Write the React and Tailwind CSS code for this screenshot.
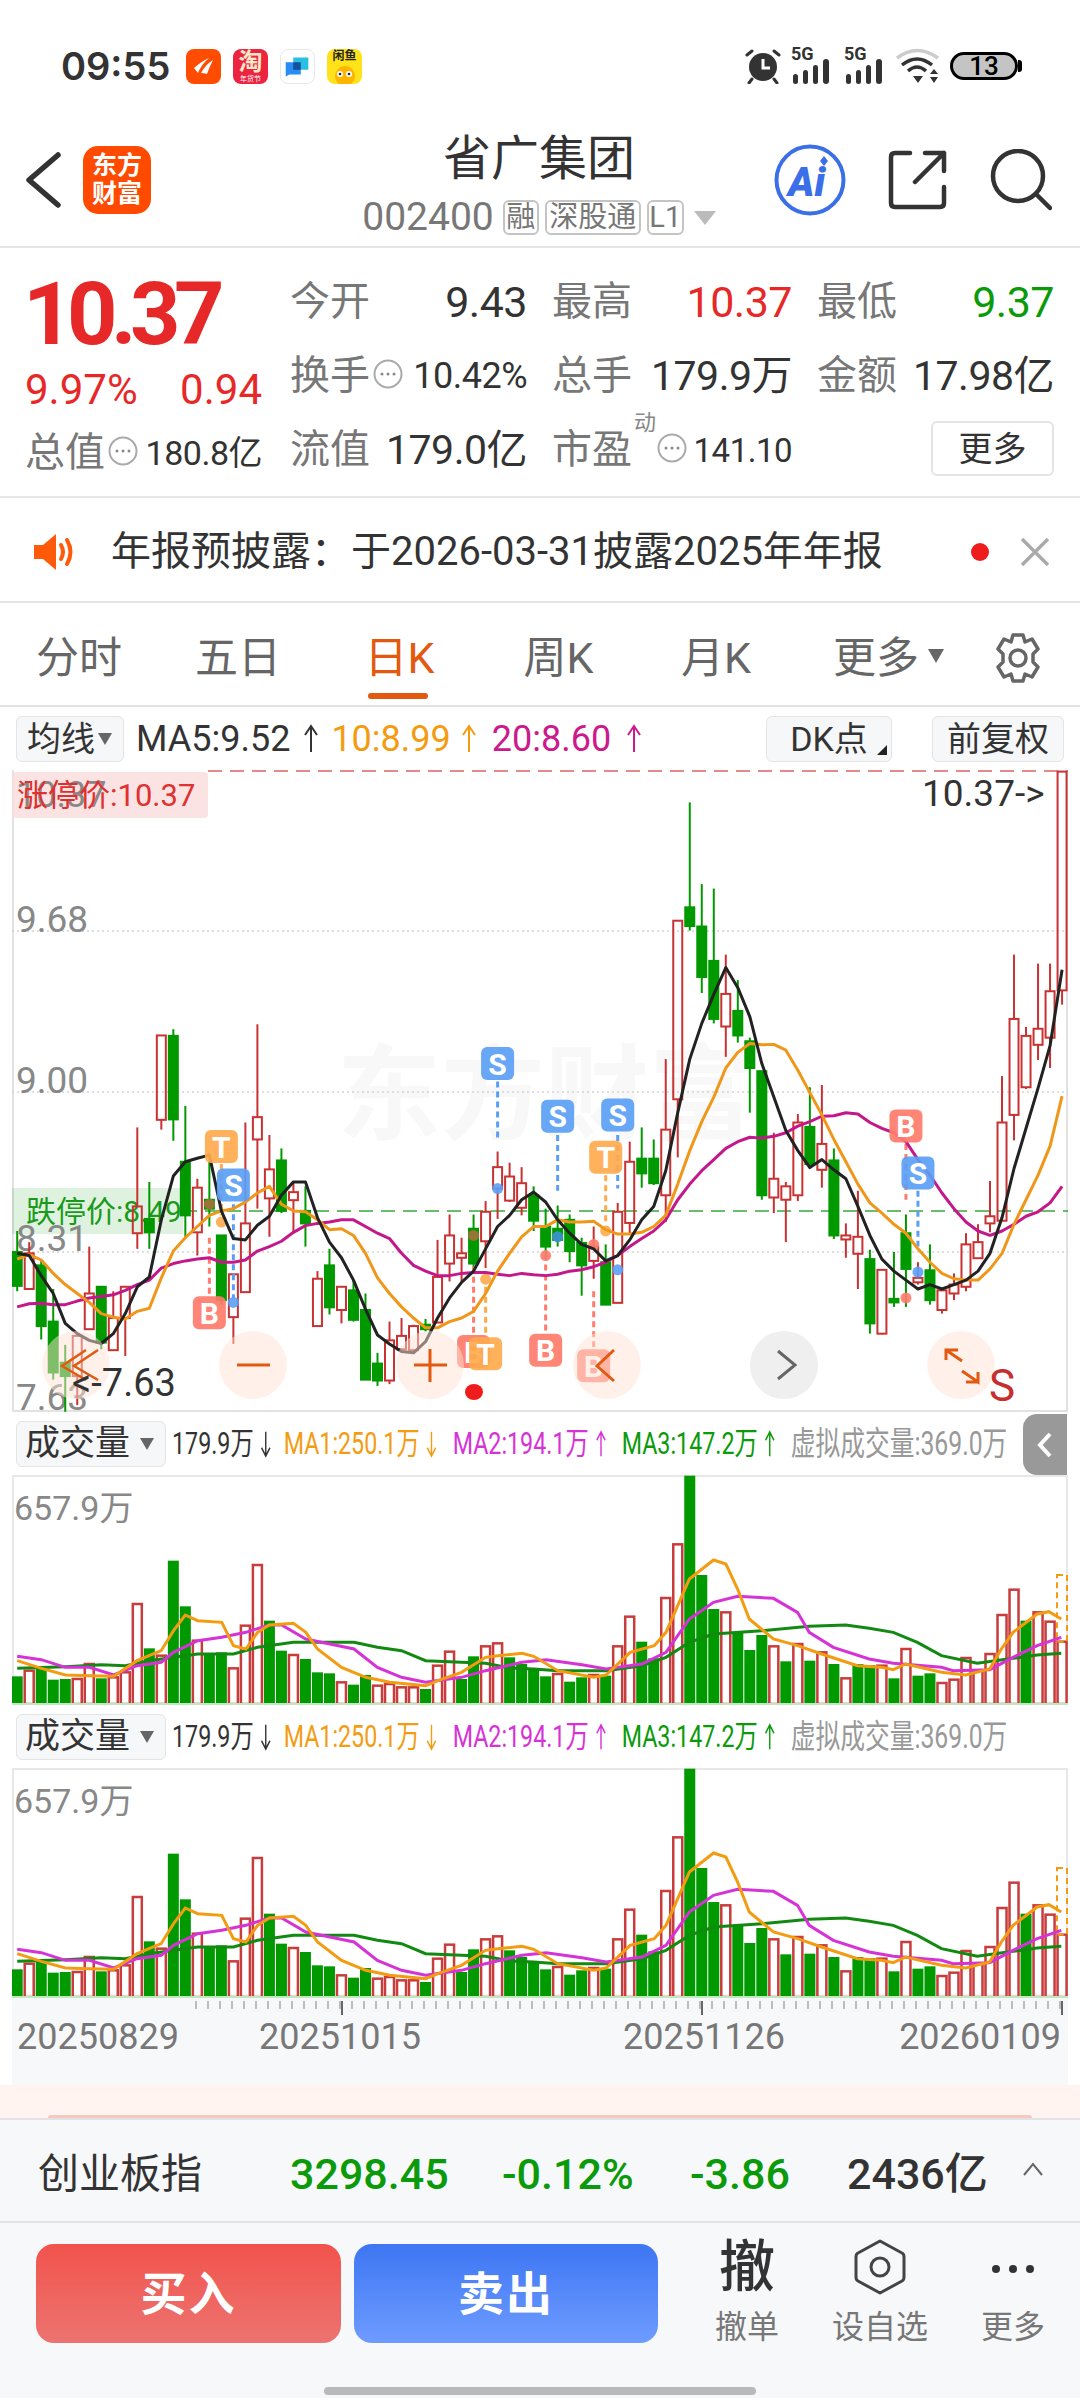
import React from 'react';

// y values below are read off the reference crops, converted by the helpers
const X = (i) => 5.2 + 12.01 * i;
const Y = (z) => z / 2.24 - 10;
const VX = (z) => z / 1.452 - 12;
const VY = (z) => z / 3 - 56;

// [up, wickTop, bodyTop, bodyBottom, wickBottom]
const CANDLES = [
  [0,1055,1102,1178,1190],[1,1080,1105,1185,1185],[0,1120,1132,1268,1298],[0,1185,1258,1372,1388],[0,1310,1350,1380,1460],
  [1,1285,1290,1380,1445],[1,1090,1195,1275,1275],[0,1178,1180,1305,1320],[1,1190,1250,1322,1322],[1,1178,1180,1250,1335],
  [1,823,1000,1060,1095],[0,945,1028,1058,1095],[1,617,617,806,828],[0,603,618,805,853],[0,775,900,1020,1068],
  [1,938,958,1058,1110],[0,900,985,1005,1045],[0,1065,1065,1210,1220],[1,1152,1152,1248,1308],[1,812,1038,1192,1192],
  [1,592,800,850,1005],[1,840,917,982,1068],[0,870,897,1010,1015],[1,945,968,986,1058],[0,955,1010,1038,1090],
  [1,1145,1162,1268,1268],[0,1095,1132,1226,1242],[1,1180,1180,1232,1262],[0,1165,1188,1254,1258],[0,1195,1232,1388,1388],
  [0,1328,1352,1390,1402],[1,1258,1300,1390,1398],[1,1250,1290,1320,1325],[1,1265,1268,1322,1325],[0,1252,1265,1275,1280],
  [1,1075,1158,1260,1260],[1,1018,1065,1128,1168],[1,1070,1105,1115,1168],[0,1018,1050,1128,1150],[1,988,1012,1078,1138],
  [1,877,912,960,1028],[1,902,933,987,990],[1,912,948,1003,1020],[0,955,975,1032,1055],[0,1005,1045,1090,1120],
  [0,998,1050,1075,1090],[0,1018,1030,1100,1125],[0,1070,1082,1132,1200],[1,1045,1090,1122,1162],[0,1085,1125,1220,1220],
  [1,992,1012,1216,1216],[1,855,900,1037,1060],[0,823,893,926,958],[0,850,893,948,952],[1,670,828,975,1035],
  [1,360,360,760,890],[0,95,330,372,382],[0,278,373,486,522],[0,288,450,580,590],[1,436,524,597,665],
  [0,493,562,617,633],[0,622,630,690,790],[0,697,697,975,985],[1,835,938,980,1015],[1,945,955,985,1080],
  [1,793,812,975,988],[0,733,822,905,912],[1,728,860,918,958],[0,870,897,1065,1073],[1,1038,1065,1074,1115],
  [1,965,1068,1106,1185],[0,1097,1118,1262,1285],[1,1142,1142,1285,1287],[0,1102,1207,1215,1225],[0,1018,1060,1140,1225],
  [1,1125,1160,1170,1175],[0,1085,1143,1210,1220],[1,1188,1188,1232,1240],[1,1150,1175,1195,1210],[1,1060,1085,1180,1190],
  [1,1040,1080,1116,1118],[1,943,1022,1038,1058],[1,708,812,1032,1032],[1,436,580,795,852],[1,598,618,733,737],
  [1,456,602,638,672],[1,456,518,622,690],[1,26,26,516,548],
];

const MA5 = [1105,1110,1155,1195,1262,1285,1300,1307,1285,1240,1180,1158,1030,932,900,892,885,1010,1072,1075,1042,1022,975,945,945,1025,1080,1115,1165,1230,1288,1308,1325,1328,1303,1250,1205,1170,1145,1095,1045,1020,985,968,990,1030,1060,1085,1095,1122,1110,1075,1030,1000,920,790,670,590,525,465,510,575,680,755,830,875,913,895,918,938,1000,1065,1118,1145,1165,1185,1175,1185,1175,1165,1145,1105,1025,915,825,735,640,470];
const MA10 = [1118,1108,1120,1150,1175,1195,1215,1240,1248,1252,1235,1228,1160,1100,1070,1045,1020,1010,1005,990,970,955,995,1010,1012,1030,1052,1050,1065,1105,1160,1195,1225,1250,1272,1272,1258,1250,1235,1195,1145,1105,1068,1045,1045,1030,1035,1035,1033,1052,1062,1062,1058,1045,1020,950,875,810,755,690,655,635,638,637,650,695,745,795,850,900,950,992,1015,1040,1060,1095,1125,1150,1162,1165,1165,1140,1105,1040,985,930,865,753];
const MA20 = [1225,1218,1217,1220,1220,1212,1205,1202,1198,1188,1175,1165,1138,1128,1122,1118,1115,1125,1125,1120,1100,1090,1078,1058,1043,1038,1035,1030,1030,1045,1060,1072,1105,1132,1145,1155,1155,1150,1148,1148,1152,1155,1150,1153,1155,1152,1145,1142,1135,1125,1110,1090,1072,1055,1030,985,950,920,895,870,855,845,847,843,835,820,810,798,797,790,793,812,825,835,855,895,930,970,1005,1035,1055,1065,1055,1040,1022,1012,992,955];

// [up, top] for each volume bar
const VOLUME = [[0,772],[1,755],[0,750],[0,782],[0,780],[1,780],[1,735],[0,778],[1,775],[1,760],[1,555],[0,688],[1,710],[0,425],[0,562],[1,665],[0,702],[0,700],[1,748],[1,620],[1,438],[0,605],[0,695],[1,708],[0,720],[0,760],[0,763],[1,790],[0,797],[0,768],[1,800],[1,795],[1,805],[1,805],[0,810],[1,740],[1,698],[0,780],[0,712],[1,682],[1,673],[0,715],[0,735],[0,750],[0,772],[1,765],[0,788],[0,775],[1,768],[0,770],[1,682],[1,593],[0,668],[0,718],[1,537],[1,376],[0,170],[0,468],[0,570],[1,580],[0,642],[0,693],[0,648],[1,682],[0,727],[1,675],[0,725],[1,700],[0,735],[1,778],[0,735],[0,738],[1,740],[0,778],[1,690],[0,770],[0,763],[1,792],[1,782],[1,717],[1,755],[1,705],[1,588],[1,512],[0,605],[1,580],[1,608],[1,668]];
const V_ORANGE = [[25,725],[60,748],[95,768],[130,770],[165,772],[199,725],[234,695],[252,635],[269,588],[287,605],[322,610],[339,680],[357,690],[374,640],[391,618],[426,613],[444,640],[461,690],[496,745],[531,775],[566,790],[618,800],[636,785],[670,760],[705,715],[723,710],[758,703],[775,712],[810,755],[862,775],[880,768],[915,700],[950,680],[967,640],[1001,480],[1036,423],[1054,435],[1071,510],[1088,600],[1123,660],[1158,680],[1193,705],[1245,740],[1280,745],[1297,752],[1315,735],[1367,760],[1402,768],[1437,750],[1454,690],[1471,640],[1506,585],[1523,578],[1541,600]];
const V_PURPLE = [[25,712],[60,722],[95,745],[130,745],[165,768],[199,740],[234,730],[252,700],[287,665],[322,655],[357,640],[391,618],[409,618],[444,660],[479,675],[514,690],[548,745],[583,775],[618,790],[670,775],[705,755],[758,730],[793,722],[845,737],[880,750],[932,735],[967,700],[1001,600],[1036,550],[1071,532],[1123,538],[1158,580],[1175,640],[1210,685],[1262,720],[1297,733],[1367,745],[1384,755],[1437,752],[1471,715],[1506,680],[1541,655]];
const V_GREEN = [[25,748],[95,743],[147,737],[182,740],[217,725],[252,715],[287,705],[339,705],[374,685],[426,670],[514,670],[548,685],[583,695],[618,725],[670,730],[705,733],[740,747],[775,750],[810,755],[880,755],[932,740],[967,715],[1001,670],[1036,645],[1106,635],[1175,622],[1228,618],[1262,628],[1297,640],[1332,670],[1367,710],[1419,733],[1471,718],[1506,708],[1541,703]];

const MARKERS = [
  ['B',16,1238,1070,1200,995,'#a8703c'],['T',17,866,905,1020,1035,'#ffaa4d'],['S',18,952,995,1205,1215,'#5b9ef5'],
  ['S',40,680,720,850,960,'#5b9ef5'],['B',38,1325,1135,1290,1065,'#a8703c'],['T',39,1330,1180,1295,1163,'#ffaa4d'],
  ['B',44,1322,1130,1285,1110,'#ff7b6b'],['S',45,798,840,965,1068,'#3f8fd8'],['S',50,795,840,960,1142,'#5b9ef5'],
  ['T',49,890,930,1040,1055,'#ffaa4d'],['B',48,1357,1190,1315,1085,'#ff7b6b'],['B',74,820,860,985,1205,'#ff7b6b'],
  ['S',75,925,965,1090,1147,'#5b9ef5'],
];
const BADGE = { S: '#5b9ef5', B: '#ff7b6b', T: '#ffaa4d' };

const points = (arr) => arr.map((v, i) => `${X(i)},${Y(v)}`).join(' ');
const vPoints = (arr) => arr.map(([x, y]) => `${VX(x)},${VY(y)}`).join(' ');

const InfoDots = ({ className }) => (
  <svg viewBox="0 0 30 30" className={className}>
    <circle cx="15" cy="15" r="13.5" fill="none" stroke="#aaa" strokeWidth="2" />
    <circle cx="9" cy="15" r="1.5" fill="#888" />
    <circle cx="15" cy="15" r="1.5" fill="#888" />
    <circle cx="21" cy="15" r="1.5" fill="#888" />
  </svg>
);

const Arrow = ({ down, className }) => (
  <svg viewBox="0 0 14 30" className={className}>
    {down ? (
      <path d="M7 2 V27 M1 19 L7 28 L13 19" fill="none" stroke="currentColor" strokeWidth="2" />
    ) : (
      <path d="M7 28 V3 M1 11 L7 2 L13 11" fill="none" stroke="currentColor" strokeWidth="2" />
    )}
  </svg>
);

const Signal = () => (
  <div className="relative w-[42px] h-[36px]">
    <span className="absolute left-[1px] -top-[3px] text-[18px] leading-none font-bold text-[#333]">5G</span>
    <svg viewBox="0 0 42 36" className="absolute inset-0 w-[42px] h-[36px]">
      <rect x="3" y="26" width="5" height="10" rx="2.5" fill="#333" />
      <rect x="13" y="22" width="5" height="14" rx="2.5" fill="#333" />
      <rect x="23" y="17" width="5" height="19" rx="2.5" fill="#333" />
      <rect x="33" y="11" width="6" height="25" rx="3" fill="#333" />
    </svg>
  </div>
);

const StatusBar = () => (
  <div className="h-[110px] pt-[22px] pl-[61px] pr-[58px] flex items-center justify-between">
    <div className="flex items-center">
      <span className="text-[38px] font-semibold leading-none text-[#333] font-['Inter',sans-serif] w-[125px]">09:55</span>
      <div className="flex gap-[12px]">
        <div className="w-[35px] h-[35px] rounded-[8px] bg-[#ff4c00] flex items-center justify-center">
          <svg viewBox="0 0 35 35" className="w-[35px] h-[35px]"><path d="M8 19 Q16 12 23 9 Q15 16 12 24 Z M15 24 Q20 15 27 11 Q23 19 21 25 Q18 24 15 24 Z" fill="#fff" /></svg>
        </div>
        <div className="w-[35px] h-[35px] rounded-[8px] bg-[#ec2440] flex flex-col items-center overflow-hidden">
          <span className="text-[24px] leading-[26px] text-[#ffe9c8] font-bold">淘</span>
          <span className="text-[7px] leading-[8px] text-white">年货节</span>
        </div>
        <div className="w-[35px] h-[35px] rounded-[8px] bg-white border border-[#e8e8e8] flex items-center justify-center">
          <svg viewBox="0 0 35 35" className="w-[33px] h-[33px]"><path d="M5 13 H21 V26 H9 L5 28 Z" fill="#2a8cf5" /><path d="M13 8 H29 V21 H21 V13 H13 Z" fill="#27c0e0" /><rect x="13" y="13" width="8" height="8" fill="#14509c" /></svg>
        </div>
        <div className="w-[35px] h-[35px] rounded-[8px] bg-[#ffe21a] flex flex-col items-center overflow-hidden">
          <span className="text-[12px] leading-[15px] text-[#222] font-bold">闲鱼</span>
          <svg viewBox="0 0 35 20" className="w-[35px] h-[20px]"><circle cx="18" cy="12" r="10" fill="#ffb400" /><circle cx="13" cy="10" r="3" fill="#fff" /><circle cx="22" cy="10" r="3" fill="#fff" /><circle cx="13" cy="10" r="1.3" fill="#222" /><circle cx="22" cy="10" r="1.3" fill="#222" /></svg>
        </div>
      </div>
    </div>
    <div className="flex items-center gap-[9px]">
      <svg viewBox="0 0 36 36" className="w-[36px] h-[36px]">
        <circle cx="18" cy="19" r="14" fill="#333" />
        <path d="M18 11 V20 H25" fill="none" stroke="#fff" strokeWidth="3" />
        <path d="M2 7 L7 3 M34 7 L29 3 M7 31 L4 35 M29 31 L32 35" stroke="#333" strokeWidth="3" strokeLinecap="round" />
      </svg>
      <Signal />
      <div className="ml-[2px]"><Signal /></div>
      <svg viewBox="0 0 44 36" className="w-[44px] h-[36px] ml-[2px]">
        <path d="M1 10 Q21 -5 42 10" fill="none" stroke="#ccc" strokeWidth="3.5" />
        <path d="M6 17 Q21 5 36 17" fill="none" stroke="#333" strokeWidth="3.5" />
        <path d="M12 23 Q21 15 30 23" fill="none" stroke="#333" strokeWidth="3.5" />
        <path d="M17 28 H27 L22 35 Z" fill="#333" />
        <path d="M34 26 L38 21 L42 26 Z M34 29 H42 L38 35 Z" fill="#333" />
      </svg>
      <div className="flex items-center ml-[1px]">
        <div className="w-[68px] h-[28px] rounded-[14px] border-[3px] border-black bg-[#c4c4c4] flex items-center justify-center">
          <span className="text-[26px] leading-none font-medium text-black">13</span>
        </div>
        <div className="w-[4px] h-[12px] rounded-r-[3px] bg-black" />
      </div>
    </div>
  </div>
);

const Tag = ({ children, className }) => (
  <span className={`h-[35px] px-[2px] rounded-[6px] border-2 border-[#c4c4c4] text-[29px] leading-none text-[#777] flex items-center justify-center ${className}`}>{children}</span>
);

const Header = () => (
  <div className="h-[138px] border-b-2 border-[#e5e5e5] grid grid-cols-[276px_1fr_250px] pr-[28px]">
    <div className="flex items-center pt-[4px]">
      <svg viewBox="0 0 40 60" className="ml-[24px] w-[40px] h-[60px]"><path d="M34 5 L5 30 L34 55" fill="none" stroke="#333" strokeWidth="5.5" strokeLinecap="round" strokeLinejoin="round" /></svg>
      <div className="ml-[19px] w-[68px] h-[68px] rounded-[15px] bg-[#ff4a00] flex flex-col items-center justify-center text-white font-bold text-[25px] leading-[28px]">
        <span>东方</span>
        <span>财富</span>
      </div>
    </div>
    <div className="flex flex-col items-center pt-[25px]">
      <div className="text-[48px] leading-[48px] text-[#333]">省广集团</div>
      <div className="flex items-center mt-[15px] gap-[6px]">
        <span className="text-[39px] leading-none text-[#777] mr-[3px]">002400</span>
        <Tag className="w-[36px]">融</Tag>
        <Tag className="w-[96px]">深股通</Tag>
        <Tag className="w-[37px]">L1</Tag>
        <svg viewBox="0 0 22 14" className="w-[22px] h-[14px] ml-[4px]"><path d="M0 0 H22 L11 14 Z" fill="#bbb" /></svg>
      </div>
    </div>
    <div className="-ml-[40px] flex items-center justify-end gap-[42px] pt-[4px]">
      <svg viewBox="0 0 72 72" className="w-[72px] h-[72px]">
        <circle cx="36" cy="36" r="33.5" fill="none" stroke="#3b6fe8" strokeWidth="4" />
        <text x="14" y="52" fontSize="40" fontWeight="900" fontStyle="italic" fill="#3b6fe8">Ai</text>
        <path d="M50 12 L54 17 L50 22 L46 17 Z" fill="#3b6fe8" />
      </svg>
      <svg viewBox="0 0 60 60" className="w-[60px] h-[60px]">
        <path d="M22 3 H7 Q3 3 3 7 V53 Q3 57 7 57 H52 Q56 57 56 53 V37 M37 3 H56 V21 M56 3 L27 32" fill="none" stroke="#333" strokeWidth="4.5" strokeLinecap="round" strokeLinejoin="round" />
      </svg>
      <svg viewBox="0 0 62 62" className="w-[62px] h-[62px]">
        <circle cx="28" cy="27" r="25" fill="none" stroke="#333" strokeWidth="4.5" />
        <path d="M46 45 L60 59" stroke="#333" strokeWidth="4.5" strokeLinecap="round" />
      </svg>
    </div>
  </div>
);

const Cell = ({ label, value, color = 'text-[#333]', info, valueSize = 'text-[41px]', sup }) => (
  <div className="flex items-center justify-between h-[74px]">
    <div className="flex items-center shrink-0 whitespace-nowrap">
      <span className="text-[40px] leading-none text-[#777]">{label}</span>
      {sup && <span className="text-[22px] leading-none text-[#888] self-start -mt-[18px] ml-[2px]">{sup}</span>}
      {info && <InfoDots className={`w-[30px] h-[30px] -mt-[5px] ${sup ? 'ml-[1px]' : 'ml-[3px]'}`} />}
    </div>
    <span className={`${valueSize} leading-none ${color} tracking-[-0.5px] whitespace-nowrap`}>{value}</span>
  </div>
);

const Quote = () => (
  <div className="h-[250px] border-b-2 border-[#e8e8e8] pl-[25px] pr-[25px] pt-[17px] flex">
    <div className="w-[237px] shrink-0 mr-[28px] flex flex-col">
      <div className="text-[88px] leading-[88px] font-bold text-[#e62828] tracking-[-6.5px] h-[88px] mt-[5px] -ml-[2px]">10.37</div>
      <div className="flex justify-between text-[42px] leading-none text-[#e62828] mt-[11px] h-[42px]">
        <span>9.97%</span>
        <span>0.94</span>
      </div>
      <div className="mt-[5px]">
        <Cell label="总值" value="180.8亿" info valueSize="text-[34px]" />
      </div>
    </div>
    <div className="grid grid-cols-[237px_240px_237px] gap-x-[25px] content-start">
      <Cell label="今开" value="9.43" valueSize="text-[43px]" />
      <Cell label="最高" value="10.37" color="text-[#e62828]" valueSize="text-[43px]" />
      <Cell label="最低" value="9.37" color="text-[#0a9a0a]" valueSize="text-[43px]" />
      <Cell label="换手" value="10.42%" info valueSize="text-[36px]" />
      <Cell label="总手" value="179.9万" />
      <Cell label="金额" value="17.98亿" />
      <Cell label="流值" value="179.0亿" />
      <Cell label="市盈" value="141.10" sup="动" info valueSize="text-[33px]" />
      <div className="flex items-center justify-end h-[74px]">
        <div className="-mt-[3px] w-[123px] h-[55px] rounded-[6px] border-2 border-[#e4e4e4] flex items-center justify-center text-[34px] leading-none text-[#333]">更多</div>
      </div>
    </div>
  </div>
);

const Notice = () => (
  <div className="h-[105px] border-b-2 border-[#e4e4e4] flex items-center pl-[34px] pr-[30px] pt-[4px]">
    <svg viewBox="0 0 44 36" className="w-[44px] h-[36px]">
      <path d="M0 11 H9 L22 0 V36 L9 25 H0 Z" fill="#ff5a0a" />
      <path d="M27 11 Q31 18 27 25 M33 6 Q40 18 33 30" fill="none" stroke="#ff5a0a" strokeWidth="4" strokeLinecap="round" />
    </svg>
    <span className="ml-[33px] text-[40px] leading-none text-[#333] flex-1">{'年报预披露\uFF1A于2026-03-31披露2025年年报'}</span>
    <span className="w-[18px] h-[18px] rounded-full bg-[#ee1c1c]" />
    <svg viewBox="0 0 30 30" className="w-[30px] h-[30px] ml-[31px]"><path d="M2 2 L28 28 M28 2 L2 28" stroke="#aaa" strokeWidth="3.5" /></svg>
  </div>
);

const Tabs = () => (
  <div className="relative h-[104px] border-b-2 border-[#e2e2e2] flex items-center text-[43px] leading-none text-[#666] pt-[8px]">
    <span className="w-[158px] text-center">分时</span>
    <span className="w-[160px] text-center">五日</span>
    <span className="w-[163px] text-center text-[#e2590f]">日K</span>
    <span className="w-[155px] text-center">周K</span>
    <span className="w-[160px] text-center">月K</span>
    <div className="ml-[37px] flex items-center">
      <span>更多</span>
      <svg viewBox="0 0 16 14" className="w-[16px] h-[14px] ml-[9px] -mt-[4px]"><path d="M0 0 H16 L8 14 Z" fill="#666" /></svg>
    </div>
    <svg viewBox="0 0 52 52" className="w-[52px] h-[52px] ml-[48px]">
      <circle cx="26" cy="26" r="8" fill="none" stroke="#666" strokeWidth="3.5" />
      <path d="M21 3 H31 L33 10 L40 7 L46 17 L41 22 V30 L46 35 L40 45 L33 42 L31 49 H21 L19 42 L12 45 L6 35 L11 30 V22 L6 17 L12 7 L19 10 Z" fill="none" stroke="#666" strokeWidth="3.5" strokeLinejoin="round" />
    </svg>
    <span className="absolute left-[368px] bottom-[6px] w-[60px] h-[6px] rounded-full bg-[#e2590f]" />
  </div>
);

const MaRow = () => (
  <div className="h-[63px] flex items-center pl-[16px] pr-[16px] text-[36px] leading-none">
    <div className="w-[108px] h-[46px] rounded-[6px] border border-[#e4e4e4] bg-[#f6f7f9] flex items-center pl-[10px] text-[#333] text-[34px]">
      均线
      <svg viewBox="0 0 14 14" className="w-[14px] h-[14px] ml-[3px]"><path d="M0 1 H14 L7 13 Z" fill="#666" /></svg>
    </div>
    <span className="ml-[12px] text-[#333]">MA5:9.52</span>
    <Arrow className="ml-[14px] w-[14px] h-[30px] text-[#333]" />
    <span className="ml-[13px] text-[#f39c12]">10:8.99</span>
    <Arrow className="ml-[11px] w-[14px] h-[30px] text-[#f39c12]" />
    <span className="ml-[16px] text-[#cc1a8c]">20:8.60</span>
    <Arrow className="ml-[16px] w-[14px] h-[30px] text-[#cc1a8c]" />
    <div className="ml-auto w-[126px] h-[46px] rounded-[6px] border border-[#e4e4e4] bg-[#f6f7f9] flex items-center justify-center text-[#333] text-[34px] relative">
      DK点
      <svg viewBox="0 0 10 10" className="absolute right-[4px] bottom-[6px] w-[10px] h-[10px]"><path d="M10 0 V10 H0 Z" fill="#222" /></svg>
    </div>
    <div className="ml-[40px] w-[132px] h-[46px] rounded-[6px] border border-[#e4e4e4] bg-[#f6f7f9] flex items-center justify-center text-[#333] text-[34px]">前复权</div>
  </div>
);

const Chart = () => (
  <div className="ml-[12px] w-[1056px] h-[642px] border-l-2 border-r-2 border-b-2 border-[#e2e2e2]">
    <svg viewBox="0 0 1056 642" className="w-[1056px] h-[642px] block -ml-[2px]">
      <text x="325" y="362" fontSize="104" fontWeight="700" fill="#f8f8f8">东方财富</text>

      {[161, 322, 482].map((y) => (
        <line key={y} x1="0" x2="1056" y1={y} y2={y} stroke="#d4d4d4" strokeWidth="1.5" strokeDasharray="2 3" />
      ))}
      <line x1="196" x2="1056" y1="1" y2="1" stroke="#e58a8a" strokeWidth="2" strokeDasharray="14 8" />
      <line x1="171" x2="1056" y1="441" y2="441" stroke="#3aa83a" strokeWidth="1.5" strokeDasharray="14 8" />

      <rect x="0" y="2" width="196" height="46" rx="4" fill="#fbd9d9" fillOpacity="0.75" />
      <text x="4" y="37" fontSize="36" fill="#888">10.37</text>
      <text x="5" y="36" fontSize="31" fill="#e03030">涨停价:10.37</text>
      <rect x="0" y="418" width="171" height="46" fill="#0a9a0a" fillOpacity="0.13" />
      <text x="14" y="452" fontSize="30" fill="#1a9a1a">跌停价:8.49</text>
      <text x="4" y="162" fontSize="37" fill="#888">9.68</text>
      <text x="4" y="323" fontSize="37" fill="#888">9.00</text>
      <text x="4" y="481" fontSize="37" fill="#888">8.31</text>
      <text x="4" y="640" fontSize="37" fill="#888">7.63</text>
      <text x="910" y="36" fontSize="37" fill="#333">10.37-&gt;</text>

      {CANDLES.map(([up, wt, bt, bb, wb], i) => {
        const color = up ? '#c83232' : '#009900';
        return (
          <g key={i}>
            <line x1={X(i)} x2={X(i)} y1={Y(wt)} y2={Y(bt)} stroke={color} strokeWidth="2" />
            <line x1={X(i)} x2={X(i)} y1={Y(bb)} y2={Y(wb)} stroke={color} strokeWidth="2" />
            <rect x={X(i) - 4.5} y={Y(bt)} width="9" height={Y(bb) - Y(bt)} fill={up ? '#fff' : color} fillOpacity={up ? 0 : 1} stroke={color} strokeWidth="2" />
          </g>
        );
      })}

      {MARKERS.map(([l, i, by, y1, y2, dot, dc]) => (
        <g key={`${l}${i}`}>
          <line x1={X(i)} x2={X(i)} y1={Y(y1)} y2={Y(y2)} stroke={BADGE[l]} strokeWidth="3" strokeDasharray="6 4" />
          <circle cx={X(i)} cy={Y(dot)} r="5.5" fill={dc} fillOpacity="0.9" />
        </g>
      ))}

      <polyline points={points(MA20)} fill="none" stroke="#c4188a" strokeWidth="3" strokeLinejoin="round" />
      <polyline points={points(MA10)} fill="none" stroke="#f0971a" strokeWidth="3" strokeLinejoin="round" />
      <polyline points={points(MA5)} fill="none" stroke="#222" strokeWidth="3" strokeLinejoin="round" />

      {MARKERS.map(([l, i, by]) => (
        <g key={`badge${l}${i}`}>
          <rect x={X(i) - 16.5} y={Y(by) - 16.5} width="33" height="33" rx="6" fill={BADGE[l]} fillOpacity="0.92" />
          <text x={X(i)} y={Y(by) + 11} fontSize="30" fontWeight="700" fill="#fff" textAnchor="middle">{l}</text>
        </g>
      ))}

      <circle cx="64" cy="595" r="34" fill="#ffe4d6" fillOpacity="0.5" />
      <path d="M74 580 L50 596 L74 610 M86 580 L62 596 L86 610" fill="none" stroke="#e2590f" strokeWidth="2.5" />
      <text x="60" y="626" fontSize="38" fill="#333">&lt;-7.63</text>

      <circle cx="241" cy="595" r="34" fill="#ffe4d6" fillOpacity="0.5" />
      <path d="M225 595 H258" stroke="#e2590f" strokeWidth="3" />
      <circle cx="418" cy="595" r="34" fill="#ffe4d6" fillOpacity="0.5" />
      <path d="M402 595 H435 M418 579 V612" stroke="#e2590f" strokeWidth="3" />
      <ellipse cx="462" cy="622" rx="9" ry="8" fill="#ee1c1c" />
      <circle cx="595" cy="595" r="34" fill="#ffe4d6" fillOpacity="0.5" />
      <path d="M602 580 L585 596 L602 611" fill="none" stroke="#e2590f" strokeWidth="3" />
      <circle cx="772" cy="595" r="34" fill="#efefef" />
      <path d="M766 581 L783 595 L766 609" fill="none" stroke="#666" strokeWidth="3" />
      <circle cx="949" cy="595" r="34" fill="#ffe4d6" fillOpacity="0.5" />
      <path d="M934 590 V580 H946 M934 580 L950 591 M966 612 H954 M966 602 V612 L950 601" fill="none" stroke="#e2590f" strokeWidth="3" />
      <text x="977" y="631" fontSize="44" fill="#c62f2f">S</text>
    </svg>
  </div>
);

const VolumeHeader = ({ collapse }) => (
  <div className="relative h-[63px] flex items-center pl-[16px] shrink-0">
    <div className="shrink-0 w-[150px] h-[46px] rounded-[6px] border border-[#e4e4e4] bg-[#f6f7f9] flex items-center pl-[8px] text-[35px] leading-none text-[#333] whitespace-nowrap">
      成交量
      <svg viewBox="0 0 14 14" className="w-[14px] h-[14px] ml-[10px]"><path d="M0 1 H14 L7 13 Z" fill="#666" /></svg>
    </div>
    <div className="shrink-0 ml-[6px] flex items-center origin-left scale-x-[0.75] text-[31px] leading-none whitespace-nowrap">
      <span className="text-[#333]">179.9万</span>
      <Arrow down className="ml-[8px] w-[16px] h-[28px] text-[#333]" />
      <span className="ml-[16px] text-[#f39c12]">MA1:250.1万</span>
      <Arrow down className="ml-[8px] w-[16px] h-[28px] text-[#f39c12]" />
      <span className="ml-[20px] text-[#d633d6]">MA2:194.1万</span>
      <Arrow className="ml-[8px] w-[16px] h-[28px] text-[#d633d6]" />
      <span className="ml-[20px] text-[#0a9a0a]">MA3:147.2万</span>
      <Arrow className="ml-[8px] w-[16px] h-[28px] text-[#0a9a0a]" />
      <span className="ml-[20px] text-[33px] text-[#999]">虚拟成交量:369.0万</span>
    </div>
    {collapse && (
      <div className="absolute right-[13px] top-[2px] w-[44px] h-[61px] rounded-l-[14px] bg-[#999] flex items-center justify-center">
        <svg viewBox="0 0 16 26" className="w-[16px] h-[26px]"><path d="M13 2 L3 13 L13 24" fill="none" stroke="#fff" strokeWidth="4" /></svg>
      </div>
    )}
  </div>
);

const VolumePanel = () => (
  <div className="ml-[12px] w-[1056px] h-[230px] border-t-2 border-l-2 border-r-2 border-[#e8e8e8] relative">
    <span className="absolute left-[0px] top-[14px] text-[34px] leading-none text-[#888]">657.9万</span>
    <svg viewBox="0 0 1056 230" className="w-[1056px] h-[230px] block -ml-[2px] -mt-[2px]">
      {VOLUME.map(([up, top], i) => {
        const x = X(i);
        const y = VY(top);
        return up ? (
          <rect key={i} x={x - 4.5} y={y} width="9" height={229 - y} fill="none" stroke="#c83c3c" strokeWidth="2.5" />
        ) : (
          <rect key={i} x={x - 5.5} y={y} width="11" height={229 - y} fill="#009900" />
        );
      })}
      <rect x="1045" y={VY(468)} width="10" height={VY(668) - VY(468)} fill="none" stroke="#f39c12" strokeWidth="2" strokeDasharray="6 4" />
      <line x1="0" x2="1056" y1="229" y2="229" stroke="#bfe8bf" strokeWidth="2" />
      <polyline points={vPoints(V_GREEN)} fill="none" stroke="#128a12" strokeWidth="3" />
      <polyline points={vPoints(V_PURPLE)} fill="none" stroke="#d633d6" strokeWidth="3" />
      <polyline points={vPoints(V_ORANGE)} fill="none" stroke="#f39c12" strokeWidth="3" />
    </svg>
  </div>
);

const MINOR_TICKS = Array.from({ length: 73 }, (_, i) => 184 + i * 12);

const Axis = () => (
  <div className="ml-[12px] w-[1056px] h-[87px] bg-[#f7f8fa] relative">
    <svg viewBox="0 0 1056 20" className="w-[1056px] h-[20px] block">
      {MINOR_TICKS.map((x) => (
        <line key={x} x1={x} x2={x} y1="3" y2="11" stroke="#aaa" strokeWidth="1.5" />
      ))}
      {[330, 690, 1050].map((x) => (
        <line key={x} x1={x} x2={x} y1="3" y2="17" stroke="#666" strokeWidth="2" />
      ))}
    </svg>
    <div className="flex justify-between pl-[5px] pr-[7px] pt-[1px] text-[36px] leading-none text-[#777]">
      <span className="mr-[74px]">20250829</span>
      <span className="mr-[196px]">20251015</span>
      <span className="mr-[108px]">20251126</span>
      <span>20260109</span>
    </div>
  </div>
);

const IndexBar = () => (
  <div className="h-[105px] border-t-2 border-b-2 border-[#e2e3e6] bg-[#f7f8fa] flex items-center pl-[38px] pt-[7px] leading-none">
    <span className="text-[41px] text-[#333] w-[252px]">创业板指</span>
    <span className="text-[43px] font-medium text-[#0a9a0a] w-[212px]">3298.45</span>
    <span className="text-[43px] font-medium text-[#0a9a0a] w-[188px]">-0.12%</span>
    <span className="text-[43px] font-medium text-[#0a9a0a] w-[157px]">-3.86</span>
    <span className="text-[43px] font-medium text-[#333] w-[175px]">2436亿</span>
    <svg viewBox="0 0 22 16" className="w-[22px] h-[16px] -mt-[10px]"><path d="M2 14 L11 3 L20 14" fill="none" stroke="#666" strokeWidth="2" /></svg>
  </div>
);

const BottomBar = () => (
  <div className="h-[175px] bg-[#f7f8fa] relative">
    <div className="flex pl-[36px] pt-[21px]">
      <div className="w-[305px] h-[99px] rounded-[18px] bg-gradient-to-b from-[#f2524c] to-[#ec7370] flex items-center justify-center text-white text-[46px] leading-none font-bold tracking-[2px]">买入</div>
      <div className="ml-[13px] w-[304px] h-[99px] rounded-[18px] bg-gradient-to-b from-[#3d76f3] to-[#6e9bff] flex items-center justify-center text-white text-[46px] leading-none font-bold tracking-[2px]">卖出</div>
      <div className="ml-[44px] w-[90px] flex flex-col items-center -mt-[5px]">
        <span className="h-[56px] text-[56px] leading-[56px] text-[#333] font-medium">撤</span>
        <span className="mt-[16px] text-[32px] leading-none text-[#777]">撤单</span>
      </div>
      <div className="ml-[38px] w-[100px] flex flex-col items-center -mt-[5px]">
        <svg viewBox="0 0 52 56" className="w-[52px] h-[56px]">
          <path d="M26 2 L48 14 Q50 15 50 18 V38 Q50 41 48 42 L26 54 L4 42 Q2 41 2 38 V18 Q2 15 4 14 Z" fill="none" stroke="#444" strokeWidth="3" strokeLinejoin="round" />
          <circle cx="26" cy="28" r="9" fill="none" stroke="#444" strokeWidth="3" />
        </svg>
        <span className="mt-[16px] text-[32px] leading-none text-[#777]">设自选</span>
      </div>
      <div className="ml-[50px] w-[66px] flex flex-col items-center -mt-[5px]">
        <svg viewBox="0 0 48 56" className="w-[48px] h-[56px]">
          <circle cx="7" cy="30" r="4" fill="#333" />
          <circle cx="24" cy="30" r="4" fill="#333" />
          <circle cx="41" cy="30" r="4" fill="#333" />
        </svg>
        <span className="mt-[16px] text-[32px] leading-none text-[#777]">更多</span>
      </div>
    </div>
    <div className="absolute left-[324px] top-[164px] w-[432px] h-[8px] rounded-full bg-[#b8b9bb]" />
  </div>
);

export default function App() {
  return (
    <div className="w-[1080px] h-[2400px] overflow-hidden bg-white font-['Roboto','Noto_Sans_CJK_SC',sans-serif]">
      <StatusBar />
      <Header />
      <Quote />
      <Notice />
      <Tabs />
      <MaRow />
      <Chart />
      <VolumeHeader collapse />
      <VolumePanel />
      <VolumeHeader />
      <VolumePanel />
      <Axis />
      <div className="h-[33px] bg-[#fff4f0] flex items-end justify-center">
        <div className="w-[984px] h-[3px] rounded-t-[3px] bg-[#f8c8c0]" />
      </div>
      <IndexBar />
      <BottomBar />
    </div>
  );
}
